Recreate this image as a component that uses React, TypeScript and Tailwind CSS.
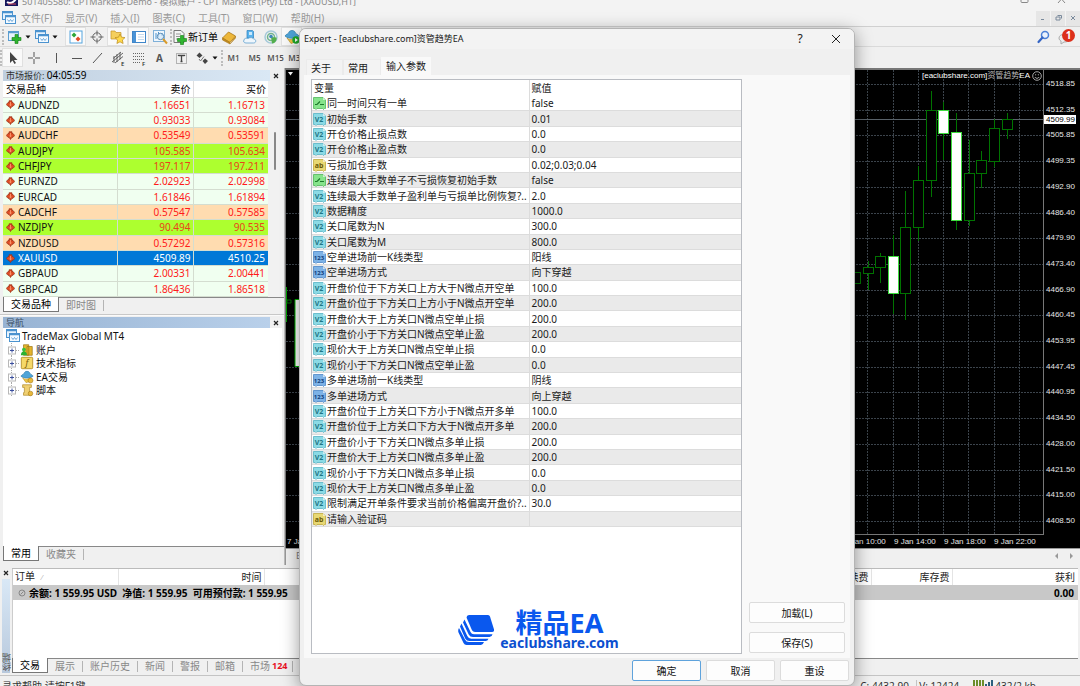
import React from "react";

type Tone = "pale" | "peach" | "green" | "selected";

const tones: Record<Tone, string> = {
  pale: "bg-[#f0fff0] text-[#ff1a1a]",
  peach: "bg-[#ffdcb0] text-[#ff1a1a]",
  green: "bg-[#adff2f] text-[#e8431a]",
  selected: "bg-[#0078d7] text-white",
};

const quotes: [string, string, string, Tone][] = [
  ["AUDNZD", "1.16651", "1.16713", "pale"],
  ["AUDCAD", "0.93033", "0.93084", "pale"],
  ["AUDCHF", "0.53549", "0.53591", "peach"],
  ["AUDJPY", "105.585", "105.634", "green"],
  ["CHFJPY", "197.117", "197.211", "green"],
  ["EURNZD", "2.02923", "2.02998", "pale"],
  ["EURCAD", "1.61846", "1.61894", "pale"],
  ["CADCHF", "0.57547", "0.57585", "peach"],
  ["NZDJPY", "90.494", "90.535", "green"],
  ["NZDUSD", "0.57292", "0.57316", "peach"],
  ["XAUUSD", "4509.89", "4510.25", "selected"],
  ["GBPAUD", "2.00331", "2.00441", "pale"],
  ["GBPCAD", "1.86436", "1.86518", "pale"],
];

type Kind = "bool" | "num" | "str" | "enum";

const params: [Kind, string, string][] = [
  ["bool", "同一时间只有一单", "false"],
  ["num", "初始手数", "0.01"],
  ["num", "开仓价格止损点数", "0.0"],
  ["num", "开仓价格止盈点数", "0.0"],
  ["str", "亏损加仓手数", "0.02;0.03;0.04"],
  ["bool", "连续最大手数单子不亏损恢复初始手数", "false"],
  ["num", "连续最大手数单子盈利单与亏损单比例恢复?..", "2.0"],
  ["num", "数据精度", "1000.0"],
  ["num", "关口尾数为N", "300.0"],
  ["num", "关口尾数为M", "800.0"],
  ["enum", "空单进场前一K线类型", "阳线"],
  ["enum", "空单进场方式", "向下穿越"],
  ["num", "开盘价位于下方关口上方大于N微点开空单", "100.0"],
  ["num", "开盘价位于下方关口上方小于N微点开空单", "200.0"],
  ["num", "开盘价大于上方关口N微点空单止损", "200.0"],
  ["num", "开盘价小于下方关口N微点空单止盈", "200.0"],
  ["num", "现价大于上方关口N微点空单止损", "0.0"],
  ["num", "现价小于下方关口N微点空单止盈", "0.0"],
  ["enum", "多单进场前一K线类型", "阴线"],
  ["enum", "多单进场方式", "向上穿越"],
  ["num", "开盘价位于上方关口下方小于N微点开多单", "100.0"],
  ["num", "开盘价位于上方关口下方大于N微点开多单", "200.0"],
  ["num", "开盘价小于下方关口N微点多单止损", "200.0"],
  ["num", "开盘价大于上方关口N微点多单止盈", "200.0"],
  ["num", "现价小于下方关口N微点多单止损", "0.0"],
  ["num", "现价大于上方关口N微点多单止盈", "0.0"],
  ["num", "限制满足开单条件要求当前价格偏离开盘价?..", "30.0"],
  ["str", "请输入验证码", ""],
];

const prices = [
  "4518.85", "4512.35", "4505.85", "4499.35", "4492.90", "4486.40", "4479.90", "4473.40", "4466.90",
  "4460.45", "4453.95", "4447.45", "4440.95", "4434.50", "4428.00", "4421.50", "4415.00", "4408.50",
];

/* centre x, wick top, body top, body bottom, wick bottom, filled */
const candles: [number, number, number, number, number, boolean][] = [
  [855, 272, 272, 283, 283, false],
  [868, 261, 267, 273, 290, false],
  [880, 253, 256, 267, 283, false],
  [893, 235, 256, 293, 314, true],
  [905, 191, 227, 293, 320, false],
  [918, 166, 180, 227, 241, false],
  [931, 91, 110, 180, 197, false],
  [943, 102, 110, 133, 160, true],
  [956, 113, 132, 220, 230, true],
  [969, 140, 173, 220, 226, false],
  [981, 151, 160, 173, 188, false],
  [994, 119, 128, 161, 167, false],
  [1007, 113, 119, 129, 139, false],
];

const gridYs = prices.map((_, i) => Math.round(84 + i * 25.7) + 0.5);
const gridXs = [867, 893, 918, 943, 968, 994, 1019];

/* ---------- icons ---------- */

function ParamIcon({ kind }: { kind: Kind }) {
  const fill = { bool: "#86e48b", num: "#8bdae5", str: "#e8d873", enum: "#7db2e6" }[kind];
  const edge = { bool: "#4fb65a", num: "#55b4c4", str: "#bfa93c", enum: "#4b86c6" }[kind];
  const ink = { bool: "#1d7a2b", num: "#1f7686", str: "#6b5a08", enum: "#123f7c" }[kind];
  const label = { bool: "", num: "V2", str: "ab", enum: "123" }[kind];
  return (
    <svg viewBox="0 0 13 14" className="h-3.5 w-[13px] shrink-0" aria-hidden="true">
      <path d="M0.500 1.500h9.500l2.500 2.500v8.500h-1l-1 1-1-1H4l-1 1-1-1H.5z" fill={fill} stroke={edge} strokeWidth="0.800" />
      <path d="M10 1.500V4h2.500z" fill="#fff" opacity="0.600" />
      {kind === "bool" ? (
        <path d="M2 8.500h2l3-3M7 8.500h4" fill="none" stroke={ink} strokeWidth="1.200" />
      ) : (
        <text x="6" y="9.500" fontSize={kind === "enum" ? 6 : 7} fontWeight="700" fill={ink} textAnchor="middle">
          {label}
        </text>
      )}
    </svg>
  );
}

function Svg({ children, box = 16 }: { children: React.ReactNode; box?: number }) {
  return (
    <svg viewBox={`0 0 ${box} ${box}`} className="h-4 w-4 shrink-0" fill="none" aria-hidden="true">
      {children}
    </svg>
  );
}

const Windows = () => (
  <>
    <rect x="1.500" y="1.500" width="10" height="8" fill="#e6f2fd" stroke="#4b93cf" />
    <path d="M1.500 2.500h10" stroke="#4b93cf" strokeWidth="1.500" />
    <rect x="4.500" y="5.500" width="10" height="8" fill="#f4faff" stroke="#4b93cf" />
    <path d="M4.500 6.500h10" stroke="#4b93cf" strokeWidth="1.500" />
    <path d="M6.500 9.500l1.500 2 1.500-2 1.500 2 1.500-2" stroke="#4b93cf" strokeWidth="0.800" />
  </>
);

const Hat = () => (
  <>
    <path d="M1 7c2-3 3-1 4-4 1-2 5-2 6 0 1 3 2 1 4 4-3 3-11 3-14 0z" fill="#4ea4d8" stroke="#2f7cab" strokeWidth="0.700" />
    <path d="M3 9c2 2 6 2 9 0l-1 4-4 1.500z" fill="#ecc544" stroke="#b68c1f" strokeWidth="0.600" />
  </>
);

const Diamond = () => (
  <svg viewBox="0 0 9 9" className="h-[9px] w-[9px] shrink-0" aria-hidden="true">
    <path d="M3 0.800h3v1.700h1l1.700 2L7 6.300H6L4.500 8.500 3 6.300H2L.3 4.500l1.700-2h1z" fill="#dd4a22" stroke="#94301a" strokeWidth="0.700" />
    <path d="M4.500 2v3.500M3.400 4.600l1.100 1.200 1.100-1.200" stroke="#ffa27a" strokeWidth="0.800" fill="none" />
  </svg>
);

const Caret = () => (
  <svg viewBox="0 0 6 4" className="h-1 w-1.5 shrink-0" aria-hidden="true">
    <path d="M0.500 0.500h5L3 3.500z" fill="#111" />
  </svg>
);

const Cross = () => (
  <svg viewBox="0 0 8 8" className="h-2 w-2" aria-hidden="true">
    <path d="M2 2l4 4M6 2l-4 4" stroke="#222" strokeWidth="1.200" />
  </svg>
);

function Tool({ label, on, children }: { label: string; on?: boolean; children: React.ReactNode }) {
  return (
    <button
      type="button"
      aria-label={label}
      className={
        on
          ? "flex h-[19px] w-[21px] shrink-0 items-center justify-center border border-[#e0e0e0] bg-[#f9f9f9]"
          : "flex h-[19px] w-[21px] shrink-0 items-center justify-center"
      }
    >
      {children}
    </button>
  );
}

const Sep = () => <span className="h-4 w-px shrink-0 bg-[#c4c4c4]" />;
const TabSep = () => <span className="h-[11px] w-px shrink-0 bg-[#b4b4b4]" />;
const Grip = () => <span className="h-4 w-0 shrink-0 border-l-2 border-dotted border-[#bdbdbd]" />;

/* ---------- top of the window ---------- */

function TitleBar() {
  return (
    <header className="flex h-2.5 shrink-0 items-end justify-between overflow-hidden bg-[#f3f3f3]">
      <div className="flex items-end gap-1 pl-[5px]">
        <svg viewBox="0 0 13 16" className="mb-1 h-4 w-[13px]" aria-hidden="true">
          <path d="M0 0h13v16H0z" fill="#16175c" />
          <path d="M2 12c3 2 6 1 9-3" stroke="#fff" strokeWidth="2" fill="none" />
          <path d="M3 14h8" stroke="#e05060" />
        </svg>
        <span className="whitespace-nowrap text-[9px] leading-4 text-[#8a8a8a]">
          501405580: CPTMarkets-Demo - 模拟账户 - CPT Markets (Pty) Ltd - [XAUUSD,H1]
        </span>
      </div>
      <div className="flex gap-7 pb-[6px] pr-3.5">
        <svg viewBox="0 0 9 10" className="h-2.5 w-[9px]" aria-label="最大化">
          <rect x="1" y="1" width="7" height="7.500" rx="1" fill="none" stroke="#888" />
        </svg>
        <svg viewBox="0 0 9 10" className="h-2.5 w-[9px]" aria-label="关闭">
          <path d="M1 1l7 8M8 1L1 9" stroke="#888" />
        </svg>
      </div>
    </header>
  );
}

const menus = ["文件(F)", "显示(V)", "插入(I)", "图表(C)", "工具(T)", "窗口(W)", "帮助(H)"];

function MenuBar() {
  return (
    <nav className="flex h-[17px] shrink-0 items-center border-b border-[#d0d0d0] bg-[#f3f3f3] pl-px">
      <Svg><Windows /></Svg>
      <div className="ml-1 flex gap-[13px] text-[10px] leading-3 text-[#999]">
        {menus.map((m) => (
          <button type="button" key={m} className="whitespace-nowrap">{m}</button>
        ))}
      </div>
      <div className="ml-auto flex h-[15px] gap-px text-[#7a8a9c]">
        {["M5 8.500h3", "M5 6h4v3H5zM6.500 4.500h4v3", "M5 5l4 4M9 5l-4 4"].map((d) => (
          <button type="button" key={d} aria-label="窗口" className="flex w-3.5 items-center justify-center bg-[#e6e6e6]">
            <svg viewBox="0 0 14 14" className="h-3.5 w-3.5"><path d={d} fill="none" stroke="currentColor" /></svg>
          </button>
        ))}
      </div>
    </nav>
  );
}

function Toolbars() {
  return (
    <div className="shrink-0 bg-[#f0f0f0]">
      <div className="flex h-5 items-center border-b border-[#dadada] pl-0.5">
        <Grip />
        <Tool label="新图表">
          <Svg>
            <rect x="1.500" y="2.500" width="10" height="9" fill="#e8f3fc" stroke="#5b9dd0" />
            <path d="M1.500 3.500h10" stroke="#5b9dd0" strokeWidth="1.500" />
            <path d="M8 5.500h3v3h3v3h-3v3H8v-3H5v-3h3z" fill="#2fb52f" stroke="#138013" strokeWidth="0.600" />
          </Svg>
        </Tool>
        <Caret />
        <Tool label="配置文件"><Svg><Windows /></Svg></Tool>
        <Caret />
        <span className="w-[7px]" />
        <Tool label="市场报价" on>
          <Svg>
            <rect x="2" y="2" width="12" height="12" fill="#fff" stroke="#55a4dd" />
            <path d="M6 3.500l2.500 2.500L6 8.500 3.500 6z" fill="#2da63a" />
            <path d="M10 7.500l2.500 2.500-2.500 2.500L7.500 10z" fill="#e24a28" />
          </Svg>
        </Tool>
        <Tool label="数据窗口">
          <Svg>
            <circle cx="8" cy="8" r="4.200" stroke="#666" />
            <path d="M8 1.500v5M8 9.500v5M1.500 8h5M9.500 8h5" stroke="#666" />
          </Svg>
        </Tool>
        <Tool label="导航" on>
          <Svg>
            <path d="M1 2h4l1 1.500h5V10H1z" fill="#f5cf5d" stroke="#c59426" strokeWidth="0.700" />
            <path d="M10 5l1.500 3.200 3.500.4-2.600 2.400.7 3.500L10 12.800 6.900 14.500l.7-3.500L5 8.600l3.500-.4z" fill="#ffd94a" stroke="#b98a1c" strokeWidth="0.700" />
          </Svg>
        </Tool>
        <Tool label="终端" on>
          <Svg>
            <rect x="1.500" y="2.500" width="13" height="11" fill="#fff" stroke="#3f86c9" />
            <path d="M2 3h3v10H2z" fill="#4b93d6" />
            <path d="M7 5.500h6M7 8h6M7 10.500h6" stroke="#c3d9ee" />
          </Svg>
        </Tool>
        <Tool label="策略测试">
          <Svg>
            <rect x="1.500" y="1.500" width="11" height="11" fill="#eef6fd" stroke="#7fb0d8" />
            <path d="M4 4v6M6.500 3v5M10 4v3" stroke="#4b93cf" />
            <circle cx="8.500" cy="7.500" r="3.200" fill="#d4eafa" fillOpacity="0.700" stroke="#5a8bb5" />
            <path d="M11 10l4 4.500" stroke="#d99b2b" strokeWidth="2" />
          </Svg>
        </Tool>
        <Grip />
        <button type="button" className="flex h-[19px] items-center whitespace-nowrap text-[10px] leading-3 text-black">
          <Svg>
            <path d="M2 1.500h7l3 3v9H2z" fill="#f5f5f5" stroke="#777" />
            <path d="M4 5h5M4 7.500h4M4 10h3" stroke="#999" />
            <path d="M8.500 6.500h3v3h3v3h-3v3h-3v-3h-3v-3h3z" fill="#2fb52f" stroke="#138013" strokeWidth="0.600" />
          </Svg>
          新订单
        </button>
        <Tool label="编辑器">
          <Svg>
            <path d="M1.500 9l6-6 7 4-5.500 6.500z" fill="#edb73a" stroke="#a97715" strokeWidth="0.800" />
            <path d="M1.500 9v2L9 15v-1.500zM9 15l5.500-6V7" fill="#c28c20" stroke="#a97715" strokeWidth="0.600" />
          </Svg>
        </Tool>
        <Tool label="社区">
          <Svg>
            <path d="M5 1.500h5.500l1 1V9H5z" fill="#58b2ec" stroke="#2d7fbd" strokeWidth="0.700" />
            <path d="M7 3h3v3H7z" fill="#c9e8fb" />
            <path d="M2 11c0-2 3-2 4-1.500 2-1.500 5-1 5.500.5 3 0 3 4 0 4H4c-2 0-3-1.500-2-3z" fill="#eef6fc" stroke="#5d9fce" strokeWidth="0.800" />
          </Svg>
        </Tool>
        <Tool label="信号">
          <Svg>
            <circle cx="8" cy="8" r="6" stroke="#a5c9d9" strokeWidth="1.500" />
            <circle cx="8" cy="8" r="3.500" stroke="#72b48e" strokeWidth="1.500" />
            <path d="M8 8l1 6.500c4-.5 5-4 4.500-6z" fill="#53ae4c" />
            <circle cx="8" cy="7.500" r="1.800" fill="#3d88b8" />
          </Svg>
        </Tool>
        <Tool label="自动交易" on>
          <Svg>
            <Hat />
            <circle cx="12" cy="11" r="3.700" fill="#1faa28" />
            <path d="M11 9l3 2-3 2z" fill="#fff" />
          </Svg>
        </Tool>
        <div className="ml-auto flex items-center gap-1.5 pr-[3px]">
          <button type="button" aria-label="搜索">
            <Svg>
              <circle cx="10" cy="6" r="3.500" fill="#eaf2fd" stroke="#4a7fd6" strokeWidth="1.500" />
              <path d="M7.500 8.500L3.500 13" stroke="#3565c4" strokeWidth="2.200" strokeLinecap="round" />
            </Svg>
          </button>
          <button type="button" aria-label="通知" className="relative h-[18px] w-5">
            <svg viewBox="0 0 20 18" className="h-[18px] w-5" aria-hidden="true">
              <path d="M2 10c0-5 11-5 11 0 0 3-3 4-6 4l-3 2v-3c-1-.5-2-1.500-2-3z" fill="#eee" stroke="#aaa" />
            </svg>
            <span className="absolute right-0.5 top-px h-[13px] w-[13px] rounded-full bg-[#dc2f1b] text-center text-[10px] font-bold leading-[13px] text-white">1</span>
          </button>
        </div>
      </div>
      <div className="flex h-[21px] items-center text-[8px] font-semibold text-[#555]">
        <Grip />
        <Tool label="光标" on>
          <Svg><path d="M5 2v11l2.500-2.500L9.500 14l1.500-1-2-3h3.500z" fill="#444" /></Svg>
        </Tool>
        <Tool label="十字线"><Svg><path d="M8 2v5M8 9v5M2 8h5M9 8h5" stroke="#555" /></Svg></Tool>
        <Tool label="垂直线"><Svg><path d="M9.500 3v10" stroke="#555" /></Svg></Tool>
        <Tool label="水平线"><Svg><path d="M4 8.500h10" stroke="#555" /></Svg></Tool>
        <Tool label="趋势线"><Svg><path d="M4 13l9-10" stroke="#555" /></Svg></Tool>
        <Tool label="等距通道">
          <Svg>
            <path d="M2 12L13 3M3 8.500L11 2M5 13l8-6.500M4 6v7M7 4v8M10 2.500v7" stroke="#555" strokeWidth="0.900" />
            <text x="11" y="15.500" fontSize="6" fill="#333">E</text>
          </Svg>
        </Tool>
        <Tool label="斐波纳契">
          <Svg>
            <path d="M2 3.500h12M2 6.500h12M2 9.500h12M2 12.500h7" stroke="#666" strokeDasharray="1 1" />
            <text x="11" y="15.500" fontSize="6" fill="#333">F</text>
          </Svg>
        </Tool>
        <Tool label="文本"><span className="text-[10px] font-bold leading-3">A</span></Tool>
        <Tool label="文本标签">
          <Svg>
            <rect x="3.500" y="3.500" width="10" height="10" stroke="#777" strokeDasharray="1 1" />
            <path d="M5.500 6V5.500h6V6M8.500 5.500v6M7.500 11.500h2" stroke="#444" strokeWidth="1.300" />
          </Svg>
        </Tool>
        <Tool label="箭头">
          <Svg>
            <path d="M5.500 2.500L8.500 5.500 5.500 8 2.500 5.500zM11 8.500l3 2.500-3 3-2.500-3z" fill="#444" />
            <path d="M5 9l1.500 2L10 6.500" stroke="#777" />
          </Svg>
        </Tool>
        <Caret />
        <span className="w-[3px]" />
        <Grip />
        {["M1", "M5", "M15", "M30"].map((t) => (
          <button type="button" key={t} className="w-[21px] shrink-0 text-center leading-3">{t}</button>
        ))}
      </div>
    </div>
  );
}

/* ---------- left docks ---------- */

function DockTitle({ children, close, strong }: { children: React.ReactNode; close: string; strong?: boolean }) {
  return (
    <div className="flex h-[11px] shrink-0 items-center">
      <h2
        className={
          strong
            ? "h-full flex-1 bg-linear-to-r from-[#97b3d3] to-[#b9d0ea] pl-[3px] text-[9px] leading-[11px] text-[#3c4f63]"
            : "h-full flex-1 bg-linear-to-r from-[#c0cfdf] to-[#dae8f5] pl-[3px] text-[9px] leading-[11px] text-[#333]"
        }
      >
        {children}
      </h2>
      <button type="button" aria-label={close} className="pl-0.5 pr-1"><Cross /></button>
    </div>
  );
}

function DockTabs({ active, other }: { active: string; other: string }) {
  return (
    <div role="tablist" className="flex h-[15px] shrink-0 items-stretch text-[10px] leading-[13px]">
      <button type="button" role="tab" aria-selected="true" className="border-x border-b border-[#777] bg-white px-[7px] text-black">{active}</button>
      <button type="button" role="tab" aria-selected="false" className="border-t border-[#888] px-[7px] text-[#888]">{other}</button>
      <span className="flex flex-1 items-center border-t border-[#888]"><TabSep /></span>
    </div>
  );
}

function MarketWatch() {
  return (
    <section className="flex shrink-0 flex-col border-b border-[#c8c8c8] pb-0.5 pl-[3px] pt-0.5">
      <DockTitle close="关闭市场报价"><>市场报价: <span className="text-[10px] text-black">04:05:59</span></></DockTitle>
      <div className="flex">
        <table className="h-[216px] flex-1 table-fixed border-collapse text-[10px] leading-3">
          <colgroup>
            <col />
            <col className="w-[76px]" />
            <col className="w-[75px]" />
          </colgroup>
          <thead>
            <tr className="h-4 bg-white text-black">
              <th className="border-b border-r border-[#dedede] p-0 pl-[3px] text-left font-normal">交易品种</th>
              <th className="border-b border-r border-[#dedede] p-0 pr-0.5 text-right font-normal">卖价</th>
              <th className="border-b border-[#dedede] p-0 pr-0.5 text-right font-normal">买价</th>
            </tr>
          </thead>
          <tbody>
            {quotes.map(([name, bid, ask, tone]) => (
              <tr key={name} className={tones[tone]}>
                <td className="border-b border-r border-[#d4ddd0] p-0">
                  <span className={tone === "selected" ? "flex items-center gap-[3px] pl-[3px] text-white" : "flex items-center gap-[3px] pl-[3px] text-[#111]"}>
                    <Diamond />{name}
                  </span>
                </td>
                <td className="border-b border-r border-[#d4ddd0] p-0 pr-0.5 text-right">{bid}</td>
                <td className="border-b border-[#d4ddd0] p-0 pr-[3px] text-right">{ask}</td>
              </tr>
            ))}
          </tbody>
        </table>
        <div className="flex w-4 justify-center bg-[#f1f1f1] pr-0.5 pt-[51px]">
          <span className="h-[38px] w-0.5 rounded bg-[#888]" />
        </div>
      </div>
      <DockTabs active="交易品种" other="即时图" />
    </section>
  );
}

const treeIcons: React.ReactNode[] = [
  <>
    <path d="M4 2h6v12H4zM8 4h6v10H8z" fill="#e5b52c" stroke="#9b7413" strokeWidth="0.800" />
    <circle cx="4.500" cy="7.500" r="2.200" fill="#39c13d" />
    <path d="M1 14c0-6 7-6 7 0z" fill="#2bb131" />
  </>,
  <>
    <rect x="1.500" y="1.500" width="13" height="13" rx="1" fill="#f5d868" stroke="#b58f25" />
    <text x="8" y="11.500" fontSize="10" fontStyle="italic" textAnchor="middle" fill="#7a5a08">f</text>
  </>,
  <>
    <Hat />
    <circle cx="12" cy="12" r="2.800" fill="#e8b93a" stroke="#a67c1b" strokeWidth="0.700" />
  </>,
  <>
    <path d="M3 2h10v3h-2v6h2v3H4v-3h1V5H3z" fill="#f0d072" stroke="#b08b2b" strokeWidth="0.800" />
    <circle cx="12" cy="12" r="2.600" fill="#e8b93a" stroke="#a67c1b" strokeWidth="0.700" />
  </>,
];

function Navigator() {
  return (
    <section className="flex min-h-0 flex-1 flex-col border-t border-[#fafafa] pb-1 pl-[3px] pt-px">
      <DockTitle close="关闭导航" strong>导航</DockTitle>
      <div className="mr-0.5 min-h-0 flex-1 bg-white pl-0.5 pt-px text-[10px] leading-3 text-[#111]">
        <div className="flex h-3.5 items-center gap-px"><Svg><Windows /></Svg>TradeMax Global MT4</div>
        <ul className="ml-[3px] flex h-[54px] flex-col">
          {["账户", "技术指标", "EA交易", "脚本"].map((t, i) => (
            <li key={t} className="flex min-h-0 flex-1 items-center">
              <svg viewBox="0 0 12 14" className="h-3.5 w-3 shrink-0" aria-hidden="true">
                <path d="M3.500 0v14M8 7.500h4" stroke="#aaa" strokeDasharray="1 1" />
                <rect x="0.500" y="4" width="7" height="7" fill="#fff" stroke="#b8b8b8" />
                <path d="M2 7.500h4M4 5.500v4" stroke="#3b4f9c" />
              </svg>
              <svg viewBox="0 0 16 16" className="h-3.5 w-3.5 shrink-0" fill="none" aria-hidden="true">{treeIcons[i]}</svg>
              <span className="pl-0.5">{t}</span>
            </li>
          ))}
        </ul>
      </div>
      <DockTabs active="常用" other="收藏夹" />
    </section>
  );
}

/* ---------- chart ---------- */

function Chart() {
  return (
    <section className="flex min-w-0 flex-1 flex-col">
      <div className="relative flex min-h-0 flex-1 flex-col border-l border-t-2 border-[#777] bg-black font-['Liberation_Sans','Noto_Sans_CJK_SC',sans-serif] text-[8px] leading-[10px] text-[#e6e6e6]">
        <div className="flex min-h-0 flex-1 justify-between">
          <svg viewBox="286 70 16 465" preserveAspectRatio="none" className="h-full w-4" aria-hidden="true">
            {gridYs.map((y) => <path key={y} d={`M286 ${y}h16`} stroke="#3c444c" strokeDasharray="2 1" />)}
            <path d="M286 119.500h16" stroke="#59626a" />
            <path d="M288 72h5l-2.500 3.500z" fill="#fff" />
            <path d="M286.500 287v35" stroke="#00a000" />
            <path d="M287 300h4v3h-4z" fill="none" stroke="#006e00" />
            <path d="M295 299.500h8v67h-8z" fill="#fff" stroke="#00b400" />
          </svg>
          <div className="flex">
            <svg viewBox="844 70 200 465" preserveAspectRatio="none" className="h-full w-[200px]" role="img" aria-label="XAUUSD">
              {gridYs.map((y) => <path key={y} d={`M844 ${y}h200`} stroke="#3c444c" strokeDasharray="2 1" />)}
              {gridXs.map((x) => <path key={x} d={`M${x + 0.5} 70v465`} stroke="#3c444c" strokeDasharray="2 1" />)}
              <path d="M844 119.500h200" stroke="#59626a" />
              {candles.map(([x, top, open, close, low, filled]) => (
                <g key={x} stroke={filled ? "#3fdc3f" : "#007300"} fill={filled ? "#fff" : "#000"}>
                  <path d={`M${x + 0.5} ${top}V${low}`} stroke="#007300" />
                  <rect x={x - 4.5} y={open + 0.5} width="10" height={close - open} />
                </g>
              ))}
              <path d="M1043.500 70v465M844 534.500h200" stroke="#777" fill="none" />
            </svg>
            <div className="relative flex w-9 flex-col justify-between py-[9px] pl-0.5">
              {prices.map((p) => <span key={p}>{p}</span>)}
              <span className="absolute left-0 top-[45px] bg-white pl-0.5 pr-px leading-[9px] text-black">4509.99</span>
            </div>
          </div>
        </div>
        <div className="flex h-[13px] shrink-0 items-center justify-between overflow-hidden">
          <span className="w-4 overflow-hidden whitespace-nowrap pl-px">7 Jan 2026</span>
          <div className="flex pr-9">
            {["9 Jan 10:00", "9 Jan 14:00", "9 Jan 18:00", "9 Jan 22:00"].map((t) => (
              <span key={t} className="w-[50px] whitespace-nowrap">{t}</span>
            ))}
          </div>
        </div>
        <div className="absolute right-[38px] top-px flex items-center gap-0.5 whitespace-nowrap text-white">
          <span>[eaclubshare.com]<span className="text-[#bbb]">资管趋势</span>EA</span>
          <svg viewBox="0 0 10 10" className="h-2.5 w-2.5" fill="none" stroke="#ccc" strokeWidth="0.800" aria-hidden="true">
            <circle cx="5" cy="5" r="4.300" />
            <path d="M3 3.800h1.200M5.800 3.800H7M2.800 6c1 1.800 3.400 1.800 4.400 0" />
          </svg>
        </div>
      </div>
      <div className="flex h-[17px] shrink-0 items-center justify-between border-l border-t border-[#999] bg-[#f0f0f0] pb-0.5 pl-2.5 pr-1.5 text-[9px] text-[#777]">
        <span>EURUSD,H1</span>
        <span className="flex gap-2.5">
          <button type="button" aria-label="向左">
            <svg viewBox="0 0 5 8" className="h-2 w-[5px]"><path d="M4 1v6L1 4z" fill="#999" /></svg>
          </button>
          <button type="button" aria-label="向右">
            <svg viewBox="0 0 5 8" className="h-2 w-[5px]"><path d="M1 1v6l3-3z" fill="#999" /></svg>
          </button>
        </span>
      </div>
    </section>
  );
}

/* ---------- terminal ---------- */

function Terminal() {
  return (
    <section className="flex h-[108px] shrink-0 border-b border-[#c4c4c4] pb-0.5 pr-0.5">
      <div className="flex w-3 flex-col px-0.5 pt-px">
        <button type="button" aria-label="关闭终端"><Cross /></button>
        <div className="mt-0.5 flex flex-1 items-end justify-center bg-linear-to-b from-[#d9e8f6] to-[#b7c8dc] pb-0.5">
          <h2 className="rotate-180 text-[9px] leading-[9px] text-[#555] [writing-mode:vertical-rl]">终端</h2>
        </div>
      </div>
      <div className="flex min-w-0 flex-1 flex-col border-t border-[#bbb]">
        <div className="flex-1 border-l border-[#ccc] bg-white">
          <table className="w-full table-fixed border-collapse text-[10px] leading-3 text-[#222]">
            <thead>
              <tr className="h-4">
                <th className="w-[105px] border-r border-[#e4e4e4] p-0 pl-0.5 text-left font-normal">
                  订单 <span className="pl-1 text-[7px] text-[#aaa]">⁄</span>
                </th>
                <th className="w-[146px] border-r border-[#e4e4e4] p-0 pr-0.5 text-right font-normal">时间</th>
                <th className="border-r border-[#e4e4e4] p-0 pr-0.5 text-right font-normal">手续费</th>
                <th className="w-[81px] border-r border-[#e4e4e4] p-0 pr-0.5 text-right font-normal">库存费</th>
                <th className="w-[126px] p-0 pr-[3px] text-right font-normal">获利</th>
              </tr>
            </thead>
            <tbody>
              <tr className="h-[15px] bg-[#c8c8c8] font-bold text-black">
                <td colSpan={4} className="p-0">
                  <span className="flex items-center gap-[3px] whitespace-pre pl-[5px]">
                    <svg viewBox="0 0 8 8" className="h-2 w-2 shrink-0" fill="none" stroke="#888" aria-hidden="true">
                      <circle cx="4" cy="4" r="3" /><path d="M2.500 5.500l3-3" />
                    </svg>
                    余额: 1 559.95 USD  净值: 1 559.95  可用预付款: 1 559.95
                  </span>
                </td>
                <td className="p-0 pr-1 text-right">0.00</td>
              </tr>
            </tbody>
          </table>
        </div>
        <div role="tablist" className="flex h-[15px] shrink-0 items-stretch text-[10px] leading-[13px] text-[#888]">
          <button type="button" role="tab" aria-selected="true" className="border-x border-b border-[#777] bg-white px-[7px] text-black">交易</button>
          {["展示", "账户历史", "新闻", "警报", "邮箱"].map((t) => (
            <span key={t} className="flex items-center border-t border-[#888]">
              <button type="button" role="tab" aria-selected="false" className="px-[7px]">{t}</button>
              <TabSep />
            </span>
          ))}
          <span className="flex flex-1 items-center border-t border-[#888]">
            <button type="button" role="tab" aria-selected="false" className="flex items-center gap-0.5 pl-[7px] pr-[5px]">
              市场<span className="text-[9px] font-bold leading-3 text-[#e81123]">124</span>
            </button>
            <TabSep />
          </span>
        </div>
      </div>
    </section>
  );
}

function StatusBar() {
  return (
    <footer className="flex h-2.5 shrink-0 items-start justify-between overflow-hidden bg-[#f0f0f0] pt-1 text-[10px] leading-3 text-[#333]">
      <span className="pl-0.5">寻求帮助,请按F1键</span>
      <span className="flex items-start whitespace-nowrap pr-11">
        <span className="w-14 pr-1">C: 4432.90</span>
        <Sep />
        <span className="w-14 pl-0.5">V: 12424</span>
        <svg viewBox="0 0 20 10" className="h-2.5 w-5" aria-hidden="true">
          <path d="M1 0v10M4 0v10M7 0v10M10 0v10" stroke="#6d8d2a" strokeWidth="2" />
          <path d="M13 4v6M16 2v8M19 0v10" stroke="#2d5f7d" strokeWidth="2" />
        </svg>
        <span className="pl-0.5">432/2 kb</span>
      </span>
    </footer>
  );
}

/* ---------- dialog ---------- */

function PushButton({ children, primary, className }: { children: React.ReactNode; primary?: boolean; className: string }) {
  return (
    <button
      type="button"
      className={`h-[21px] rounded-[2px] border bg-[#fdfdfd] text-[10px] leading-3 text-[#111] ${primary ? "border-[#5fa3dc]" : "border-[#dcdcdc]"} ${className}`}
    >
      {children}
    </button>
  );
}

function Brand() {
  return (
    <div className="mx-auto flex items-center gap-1.5 pl-6 text-[#0a58ee]">
      <svg viewBox="0 0 36 32" className="h-8 w-9" fill="currentColor" aria-hidden="true">
        <path d="M11 1h19q1.500 0 2 1.500L36 15.500q.4 2.500-2 2.500H17q-2 0-3-1.800L8.700 4Q8.200 1.500 11 1z" />
        <path d="M6.500 5.500L12.500 18q1 2.300 3.500 2.300h18.500q-.5 2.700-3 2.700H15q-3 0-4.300-2.500L5 8.500z" />
        <path d="M3.500 9.500L9.300 22q1.200 2.700 4 2.700H30.500q-.8 2.300-3 2.300H11.500q-3 0-4.300-2.500L2 12.500z" />
        <path d="M1 14l6 11.500q1.200 2.600 4 2.600h15q-1 2.900-3 2.900H8.500q-2 0-3-2L.5 18.500Q-.3 16 1 14z" />
      </svg>
      <div className="flex flex-col items-center font-bold">
        <span className="text-[27px] leading-[27px]">精品EA</span>
        <span className="text-[14px] leading-[14px] text-[#0b4fd0]">eaclubshare.com</span>
      </div>
    </div>
  );
}

function ExpertDialog() {
  return (
    <div
      role="dialog"
      aria-label="Expert"
      className="absolute bottom-0 left-[299px] right-[225px] top-7 flex flex-col overflow-hidden rounded-[7px] border border-[#b4b4b4] bg-[#f0f0f0] text-[10px] leading-3 text-[#1a1a1a] shadow-[0_4px_18px_rgba(0,0,0,0.4)]"
    >
      <header className="flex h-5 shrink-0 items-center bg-[#f3f3f3] pl-1">
        <h1 className="flex-1 text-[9px]">Expert - [eaclubshare.com]资管趋势EA</h1>
        <button type="button" aria-label="帮助" className="w-9 text-xs">?</button>
        <button type="button" aria-label="关闭" className="flex w-9 justify-center">
          <svg viewBox="0 0 10 10" className="h-2.5 w-2.5"><path d="M1 1l8 8M9 1L1 9" stroke="#222" /></svg>
        </button>
      </header>
      <div role="tablist" className="flex shrink-0 items-end pl-1.5 pt-2">
        <button type="button" role="tab" aria-selected="false" className="h-4 w-[37px] border border-b-0 border-[#ebebeb] bg-[#f3f3f3] pl-1 text-left">关于</button>
        <button type="button" role="tab" aria-selected="false" className="h-4 w-[38px] border border-b-0 border-[#ebebeb] bg-[#f3f3f3] pl-1 text-left">常用</button>
        <button type="button" role="tab" aria-selected="true" className="h-[18px] w-[50px] bg-[#f9f9f9]">输入参数</button>
      </div>
      <div className="mx-1 flex min-h-0 flex-1 gap-[7px] bg-[#f9f9f9] pb-1 pl-[7px] pr-[5px] pt-1">
        <div className="flex min-w-0 flex-1 flex-col border border-[#b9bcc2] bg-white">
          <table className="h-[447px] w-full table-fixed border-collapse">
            <thead>
              <tr className="h-4">
                <th className="w-[217px] border-r border-[#dcdcdc] p-0 pl-0.5 text-left font-normal">变量</th>
                <th className="p-0 pl-0.5 text-left font-normal">赋值</th>
              </tr>
            </thead>
            <tbody>
              {params.map(([kind, name, value]) => (
                <tr key={name} className="even:bg-[#eaeaea]">
                  <td className="border-b border-r border-[#dcdcdc] p-0">
                    <span className="flex items-center gap-px whitespace-nowrap pl-px"><ParamIcon kind={kind} />{name}</span>
                  </td>
                  <td className="border-b border-[#dcdcdc] p-0 pl-0.5">{value}</td>
                </tr>
              ))}
            </tbody>
          </table>
          <div className="flex flex-1 items-end pb-[3px]"><Brand /></div>
        </div>
        <div className="flex w-24 shrink-0 flex-col justify-end gap-[9px] pb-px">
          <PushButton className="w-full">加载(L)</PushButton>
          <PushButton className="w-full">保存(S)</PushButton>
        </div>
      </div>
      <footer className="flex h-[27px] shrink-0 items-start justify-end gap-[5px] pr-[5px] pt-0.5">
        <PushButton primary className="w-[69px]">确定</PushButton>
        <PushButton className="w-[69px]">取消</PushButton>
        <PushButton className="w-[69px]">重设</PushButton>
      </footer>
    </div>
  );
}

export default function App() {
  return (
    <main
      lang="zh-CN"
      className="relative flex h-screen flex-col overflow-hidden bg-[#f0f0f0] font-['Noto_Sans','Noto_Sans_CJK_SC',sans-serif]"
    >
      <TitleBar />
      <MenuBar />
      <Toolbars />
      <div className="flex min-h-0 flex-1">
        <aside className="flex w-[285px] shrink-0 flex-col border-r border-[#bbb]">
          <MarketWatch />
          <Navigator />
        </aside>
        <Chart />
      </div>
      <div className="h-[3px] shrink-0" />
      <Terminal />
      <StatusBar />
      <ExpertDialog />
    </main>
  );
}
